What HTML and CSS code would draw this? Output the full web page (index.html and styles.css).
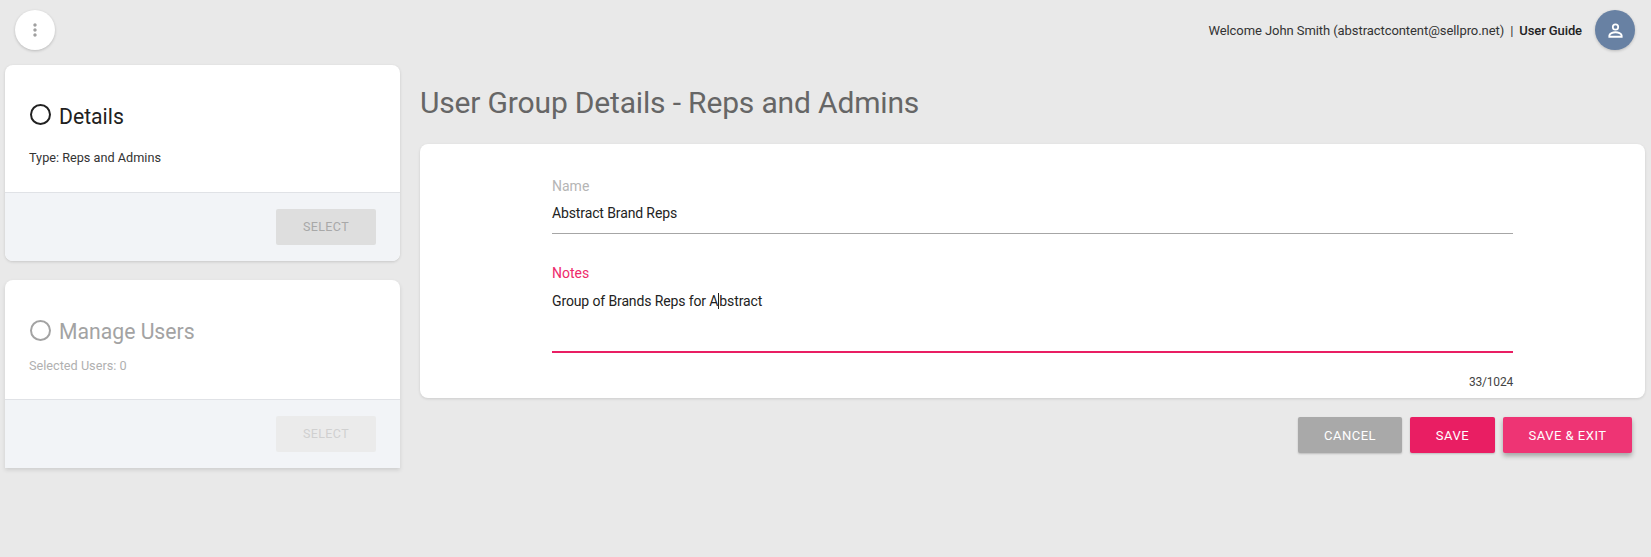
FILE: index.html
```html
<!DOCTYPE html>
<html lang="en">
<head>
<meta charset="utf-8">
<title>User Group Details</title>
<link rel="stylesheet" href="styles.css">
</head>
<body>
<header class="topbar">
  <button class="round-btn menu-btn" aria-label="Menu">
    <svg width="20" height="20" viewBox="0 0 24 24"><path fill="#a0a0a0" d="M12 8c1.1 0 2-.9 2-2s-.9-2-2-2-2 .9-2 2 .9 2 2 2zm0 2c-1.1 0-2 .9-2 2s.9 2 2 2 2-.9 2-2-.9-2-2-2zm0 6c-1.1 0-2 .9-2 2s.9 2 2 2 2-.9 2-2-.9-2-2-2z"/></svg>
  </button>
  <div class="user-area">
    <span class="welcome">Welcome John Smith (abstractcontent@sellpro.net)</span>
    <span class="sep">|</span>
    <a class="guide">User Guide</a>
    <button class="round-btn avatar-btn" aria-label="Account">
      <svg width="21" height="21" viewBox="0 0 24 24"><circle cx="12" cy="8" r="3.1" fill="none" stroke="#fff" stroke-width="2"/><path fill="none" stroke="#fff" stroke-width="2.2" d="M5 19.2v-1.6c0-2 4-3.6 7-3.6s7 1.6 7 3.6v1.6z"/></svg>
    </button>
  </div>
</header>
<div class="layout">
  <aside class="sidebar">
    <section class="step">
      <div class="step-body">
        <h2 class="step-title"><span class="ring"></span>Details</h2>
        <p class="step-info">Type: Reps and Admins</p>
      </div>
      <div class="step-foot"><button class="select-btn">SELECT</button></div>
    </section>
    <section class="step step-disabled">
      <div class="step-body">
        <h2 class="step-title"><span class="ring"></span>Manage Users</h2>
        <p class="step-info">Selected Users: 0</p>
      </div>
      <div class="step-foot"><button class="select-btn">SELECT</button></div>
    </section>
  </aside>
  <main class="content">
    <h1 class="page-title">User Group Details - Reps and Admins</h1>
    <div class="form-card">
      <div class="field field-name">
        <div class="label">Name</div>
        <div class="value">Abstract Brand Reps</div>
      </div>
      <div class="field field-notes">
        <div class="label label-active">Notes</div>
        <div class="value value-notes">Group of Brands Reps for A<span class="caret"></span>bstract</div>
      </div>
      <div class="counter">33/1024</div>
    </div>
    <div class="actions">
      <button class="action action-cancel">CANCEL</button>
      <button class="action action-save">SAVE</button>
      <button class="action action-exit">SAVE &amp; EXIT</button>
    </div>
  </main>
</div>
</body>
</html>
```
FILE: styles.css
```css
* { box-sizing: border-box; }
html, body { margin: 0; height: 100%; }
body {
  background: #e9e9e9;
  font-family: Roboto, "Liberation Sans", sans-serif;
  color: #212121;
  overflow: hidden;
}
button { font-family: inherit; border: 0; padding: 0; }

.topbar {
  display: flex;
  justify-content: space-between;
  align-items: center;
  height: 60px;
  padding: 0 16px 0 15px;
}
.round-btn {
  width: 40px;
  height: 40px;
  border-radius: 50%;
  display: flex;
  align-items: center;
  justify-content: center;
  box-shadow: 0 1px 3px rgba(0,0,0,.2);
}
.menu-btn { background: #fff; }
.avatar-btn { background: #6881a3; margin-left: 13px; }
.user-area { display: flex; align-items: center; font-size: 13px; color: #333; }
.welcome { letter-spacing: -0.07px; }
.sep { margin: 0 6px; }
.guide { font-weight: 500; color: #222; letter-spacing: -0.1px; }

.layout { display: flex; align-items: flex-start; padding: 5px 6px 0 5px; }
.sidebar { width: 395px; display: flex; flex-direction: column; gap: 19px; flex: none; }
.step {
  background: #fff;
  border-radius: 8px;
  box-shadow: 0 1px 3px rgba(0,0,0,.15);
  overflow: hidden;
}
.step-body { padding: 40px 24px 0; height: 128px; border-bottom: 1px solid #e0e2e6; }
.step-disabled { border-radius: 8px 8px 0 0; box-shadow: 0 2px 4px rgba(0,0,0,.12); }
.step-disabled .step-body { height: 120px; padding-top: 40px; }
.step-title {
  display: flex;
  align-items: center;
  margin: 0;
  font-size: 21.2px;
  font-weight: 400;
  line-height: 24px;
  color: #212121;
}
.ring {
  width: 21px;
  height: 21px;
  border: 2px solid #212121;
  border-radius: 50%;
  margin: -6px 8px 0 1px;
  flex: none;
}
.step-info { margin: 21px 0 0; font-size: 12.7px; line-height: 16px; color: #333; }
.step-disabled .step-info { margin-top: 14px; color: #b0b0b0; }
.step-disabled .step-title { color: #a3a3a3; }
.step-disabled .ring { border-color: #a3a3a3; margin-top: -4px; }
.step-foot {
  background: #f2f4f7;
  height: 68px;
  display: flex;
  justify-content: flex-end;
  padding: 16px 24px 0 0;
}
.select-btn {
  width: 100px;
  height: 36px;
  padding-bottom: 2px;
  border-radius: 2px;
  background: #dedede;
  color: #a8a8a8;
  font-size: 12.5px;
  letter-spacing: .4px;
}
.step-disabled .select-btn { background: #ebebeb; color: #d0d0d0; }

.content { flex: 1; margin-left: 20px; }
.page-title {
  margin: 0;
  height: 79px;
  padding-top: 20px;
  font-size: 30px;
  line-height: 36px;
  font-weight: 400;
  letter-spacing: -0.17px;
  color: #666;
}
.form-card {
  position: relative;
  background: #fff;
  border-radius: 8px;
  height: 254px;
  padding: 34px 132px 0;
  box-shadow: 0 1px 3px rgba(0,0,0,.12);
}
.label { font-size: 14px; line-height: 16px; color: #b5b5b5; }
.label-active { color: #ee2a6b; }
.value { font-size: 14px; line-height: 18px; color: #222; letter-spacing: -0.12px; }
.field-name { height: 56px; border-bottom: 1px solid #a6a6a6; }
.field-name .value { margin-top: 10px; }
.field-notes { margin-top: 31px; height: 88px; border-bottom: 2px solid #e91e63; }
.value-notes { margin-top: 11px; }
.caret {
  display: inline-block;
  width: 1px;
  height: 16px;
  background: #222;
  vertical-align: -3px;
}
.counter {
  margin-top: 21px;
  text-align: right;
  font-size: 12px;
  line-height: 16px;
  letter-spacing: -0.2px;
  color: #444;
}
.actions { display: flex; justify-content: flex-end; gap: 8px; margin: 19px 13px 0 0; }
.action {
  height: 36px;
  border-radius: 2px;
  color: #fff;
  font-size: 13px;
  letter-spacing: .5px;
  box-shadow: 0 1px 2px rgba(0,0,0,.2);
}
.action-cancel { width: 104px; background: #a9a9a9; }
.action-save { width: 85px; background: #e91e63; }
.action-exit { width: 129px; background: #ee3474; box-shadow: 0 3px 5px rgba(0,0,0,.3); }
```
